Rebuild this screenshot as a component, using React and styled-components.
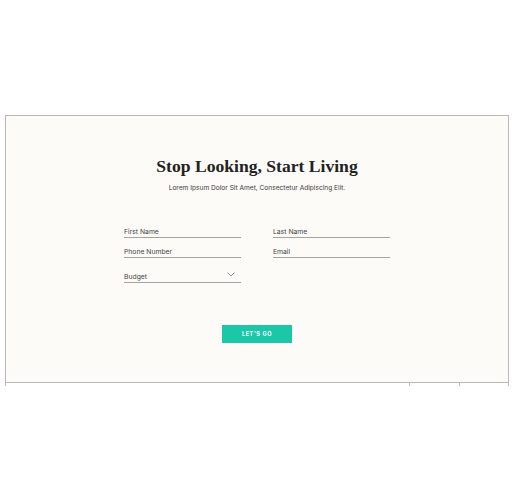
import React from 'react';
import styled, { createGlobalStyle } from 'styled-components';

const GlobalStyle = createGlobalStyle`
    body {
        margin: 0;
        background: #ffffff;
        font-family: Inter, "Liberation Sans", sans-serif;
    }
`;

const Page = styled.div`
    padding-top: 115px;
    padding-left: 5px;
    width: 504px;
`;

const Panel = styled.section`
    box-sizing: border-box;
    height: 268px;
    background: #fdfbf8;
    border: 1px solid #b9b9b9;
    display: flex;
    flex-direction: column;
    align-items: center;
    padding-top: 38px;
`;

const Title = styled.h1`
    margin: 0;
    font-family: "Liberation Serif", "DejaVu Serif", serif;
    font-weight: 700;
    font-size: 17.6px;
    color: #222;
    line-height: 24px;
`;

const Subtitle = styled.p`
    margin: 5px 0 0;
    font-size: 6.6px;
    color: #3a3a3a;
    line-height: 10px;
`;

const Form = styled.form`
    margin-top: 33px;
    display: grid;
    grid-template-columns: 117px 117px;
    column-gap: 32px;
    row-gap: 8px;
`;

const Field = styled.div`
    display: flex;
    align-items: flex-end;
    justify-content: space-between;
    height: 10px;
    padding-bottom: 1px;
    border-bottom: 1.5px solid #a3a3a3;
    font-size: 6.8px;
    color: #444;
    margin-top: ${(p) => (p.$gap ? '5px' : '0')};
`;

const Chevron = styled.svg`
    width: 8px;
    height: 5px;
    margin-right: 6px;
    margin-bottom: 4px;
`;

const Button = styled.button`
    margin-top: 42px;
    width: 70px;
    height: 18px;
    border: none;
    background: #1cc7a8;
    color: #fff;
    font-family: Inter, "Liberation Sans", sans-serif;
    font-weight: 700;
    font-size: 5.5px;
    letter-spacing: 0.6px;
    padding: 0;
`;

const Footer = styled.div`
    display: grid;
    grid-template-columns: 403px 50px 49px;
    height: 4px;
    border-left: 1px solid #b9b9b9;
    border-right: 1px solid #b9b9b9;
    box-sizing: border-box;
    margin-top: -1px;
`;

const Cell = styled.div`
    border-left: ${(p) => (p.$line ? '1px solid #b9b9b9' : 'none')};
`;

export default function App() {
    return (
        <Page>
            <GlobalStyle />
            <Panel>
                <Title>Stop Looking, Start Living</Title>
                <Subtitle>Lorem Ipsum Dolor Sit Amet, Consectetur Adipiscing Elit.</Subtitle>
                <Form>
                    <Field>First Name</Field>
                    <Field>Last Name</Field>
                    <Field>Phone Number</Field>
                    <Field>Email</Field>
                    <Field $gap>
                        Budget
                        <Chevron viewBox="0 0 8 5">
                            <path d="M0.5 0.5 L4 4 L7.5 0.5" fill="none" stroke="#888" strokeWidth="0.9" />
                        </Chevron>
                    </Field>
                </Form>
                <Button type="button">LET'S GO</Button>
            </Panel>
            <Footer>
                <Cell />
                <Cell $line />
                <Cell $line />
            </Footer>
        </Page>
    );
}
